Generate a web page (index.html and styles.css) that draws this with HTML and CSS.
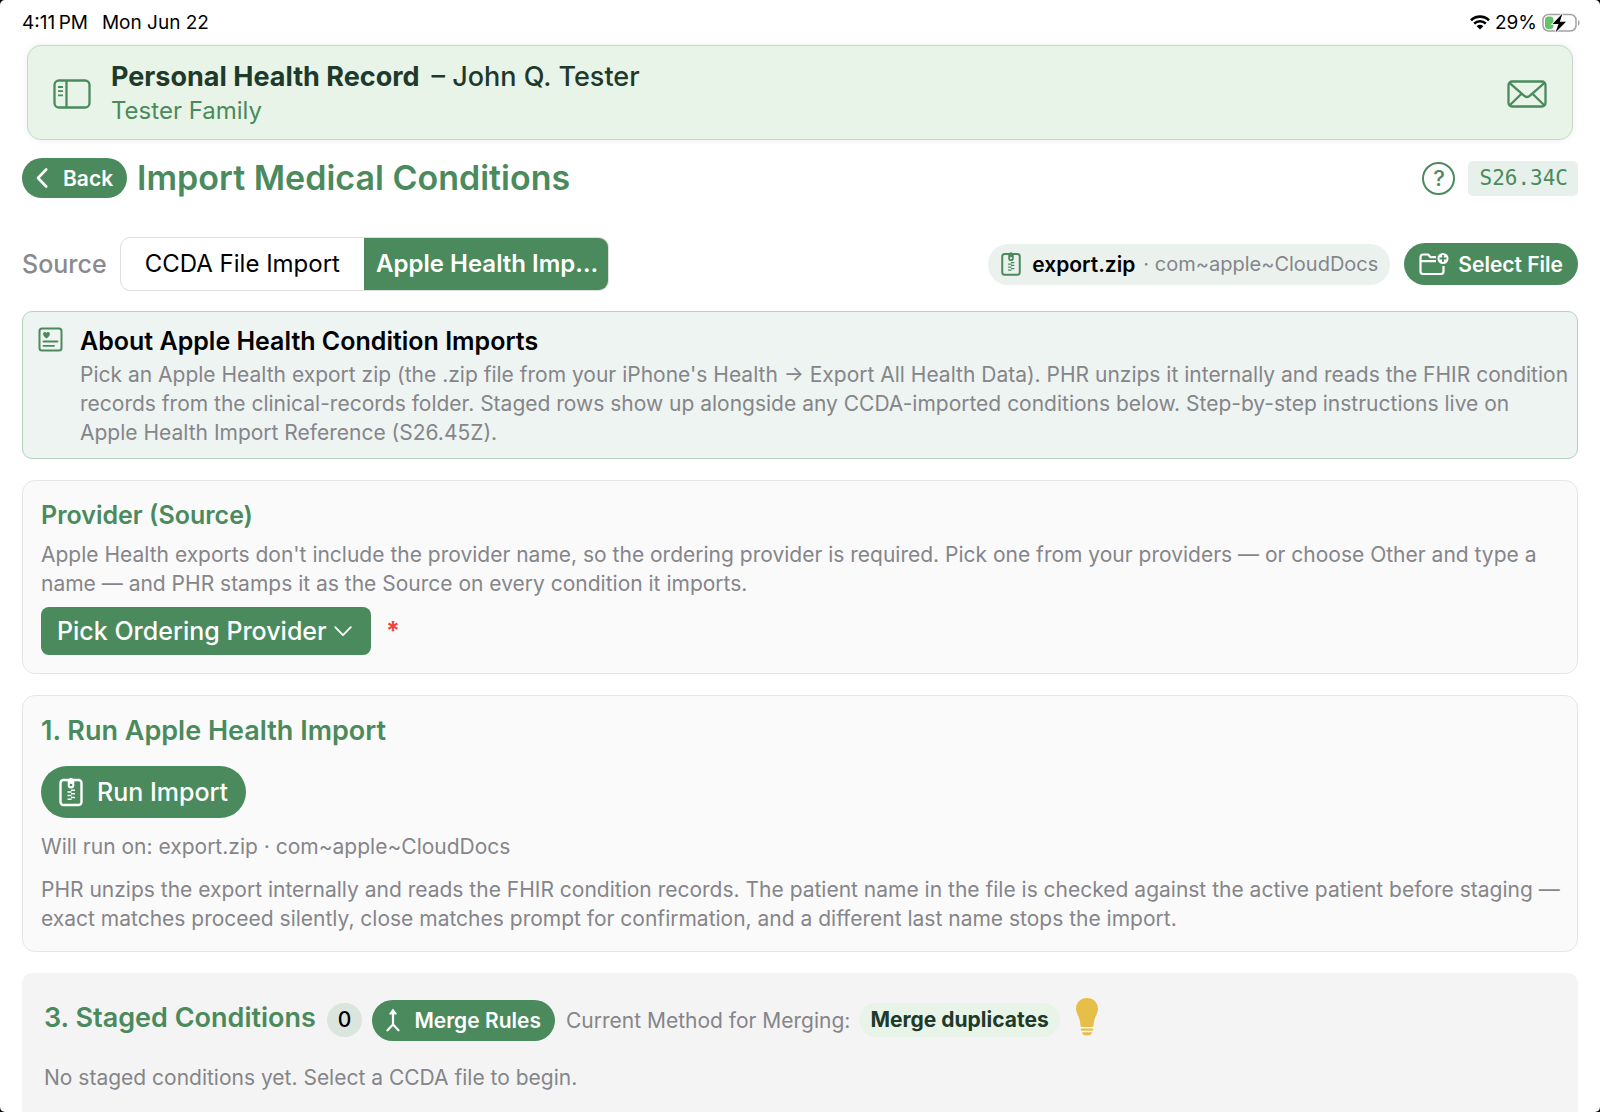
FILE: index.html
```html
<!DOCTYPE html>
<html lang="en">
<head>
<meta charset="utf-8">
<meta name="viewport" content="width=device-width, initial-scale=1">
<title>Import Medical Conditions</title>
<link rel="stylesheet" href="styles.css">
</head>
<body>
<svg class="symbols" aria-hidden="true">
  <symbol id="zip" viewBox="0 0 24 30">
    <rect x="1.5" y="3" width="21" height="25" rx="3" fill="none" stroke="currentColor" stroke-width="2.4"/>
    <path d="M12 0.8c1.3 0 2.1 1 2.1 2.2v.9h1.2v4.4a3.3 3.3 0 0 1-6.6 0V3.900h1.200V3c0-1.200.8-2.200 2.100-2.200z" fill="currentColor"/>
    <circle class="hole" cx="12" cy="8" r="1.300"/>
    <path d="M12 13.200h4M8.500 15h4M12 16.800h4M8.500 18.600h4M12 20.400h4M8.500 22.200h4" stroke="currentColor" stroke-width="1.500"/>
  </symbol>
</svg>
<div class="screen">
  <div class="status">
    <div class="status-side"><span>4:11&#8201;PM</span><span>Mon Jun 22</span></div>
    <div class="status-side status-right">
      <svg width="20" height="15" viewBox="0 0 20 15" fill="none" stroke="#000" stroke-width="2.600">
        <path d="M1 5.300a12.800 12.800 0 0 1 18 0M4.200 8.600a8.200 8.200 0 0 1 11.600 0"/>
        <path d="M6.700 11.200a4.700 4.700 0 0 1 6.600 0L10 14.500z" fill="#000" stroke="none"/>
      </svg>
      <span>29%</span>
      <svg width="38" height="20" viewBox="0 0 38 20">
        <rect x="1" y="1.500" width="33" height="16.500" rx="5.500" fill="#fff" stroke="#a2a2a2" stroke-width="1.500"/>
        <path d="M36 7c2 .8 2 4.800 0 5.600z" fill="#a2a2a2"/>
        <path d="M6.500 3.500h2.500a3 3 0 0 1 2.500 3v6.500a3 3 0 0 1-2.500 3H6.500a3.500 3.500 0 0 1-3.500-3.500V7a3.500 3.500 0 0 1 3.500-3.500z" fill="#62c466"/>
        <path d="M20.500 0.500L10.500 11h6l-3 8.500L24 8.800h-6.200z" fill="#000" stroke="#fff" stroke-width="1.600" paint-order="stroke"/>
      </svg>
    </div>
  </div>

  <header class="record">
    <button class="icon-button" aria-label="Toggle sidebar">
      <svg width="38" height="30" viewBox="0 0 38 30" fill="none" stroke="currentColor" stroke-width="2.300">
        <rect x="1.500" y="1.500" width="35" height="27" rx="4.500"/>
        <path d="M13.500 1.500v27"/><path d="M5 8h5M5 12.200h5M5 16.400h5" stroke-width="1.800"/>
      </svg>
    </button>
    <div class="record-text">
      <div class="record-name"><strong>Personal Health Record</strong><span>– John Q. Tester</span></div>
      <div class="record-family">Tester Family</div>
    </div>
    <button class="icon-button" aria-label="Messages">
      <svg width="40" height="28" viewBox="0 0 40 28" fill="none" stroke="currentColor" stroke-width="2.300" stroke-linejoin="round">
        <rect x="1.500" y="1.500" width="37" height="25" rx="3.500"/>
        <path d="M2.500 2.800L17 15.700c1.900 1.700 4.100 1.700 6 0L37.500 2.800M2.500 25.500L14.500 13.800M37.500 25.500L25.500 13.800"/>
      </svg>
    </button>
  </header>

  <main class="content">
    <div class="title-row">
      <button class="pill back">
        <svg width="12" height="20" viewBox="0 0 12 20" fill="none" stroke="currentColor" stroke-width="2.600" stroke-linecap="round" stroke-linejoin="round"><path d="M10.200 1.500L2 10l8.200 8.500"/></svg>
        <span>Back</span>
      </button>
      <h1>Import Medical Conditions</h1>
      <button class="icon-button help" aria-label="Help">
        <span>?</span>
      </button>
      <span class="code">S26.34C</span>
    </div>

    <div class="source-row">
      <span class="source-label" id="source-label">Source</span>
      <div class="segments" role="radiogroup" aria-labelledby="source-label">
        <label class="segment"><input type="radio" name="source"><span>CCDA File Import</span></label>
        <label class="segment"><input type="radio" name="source" checked><span>Apple Health Import</span></label>
      </div>
      <div class="file-chip">
        <svg class="chip-zip" width="20" height="26"><use href="#zip"/></svg>
        <strong>export.zip</strong><span>· com~apple~CloudDocs</span>
      </div>
      <button class="pill select-file">
        <svg width="30" height="24" viewBox="0 0 30 24" fill="none" stroke="currentColor" stroke-width="2.200" stroke-linejoin="round">
          <path d="M17 5.200h-5.500L9.200 2.500H4A2.500 2.500 0 0 0 1.500 5v14.500A2.500 2.500 0 0 0 4 22h18a2.500 2.500 0 0 0 2.500-2.500V14M1.500 9.200H17"/>
          <circle cx="24" cy="6.500" r="5.500" fill="currentColor" stroke="none"/>
          <path d="M24 3v7M20.500 6.500h7" stroke="#4a8a5c" stroke-width="1.800"/>
        </svg>
        <span>Select File</span>
      </button>
    </div>

    <section class="about">
      <svg width="25" height="25" viewBox="0 0 25 25" fill="none" stroke="currentColor" stroke-width="2">
        <rect x="1.500" y="1.500" width="22" height="22" rx="2.500"/>
        <path d="M8.500 11.500C3.500 8 5 5 6.800 5c.9 0 1.400.5 1.700 1.100C8.800 5.500 9.300 5 10.200 5c1.800 0 3.300 3-1.700 6.500z" fill="currentColor" stroke="none"/>
        <path d="M5.500 14.500h14M5.500 18.800h10.500" stroke-linecap="round" stroke-width="1.800"/>
      </svg>
      <div>
        <h2>About Apple Health Condition Imports</h2>
        <p>Pick an Apple Health export zip (the .zip file from your iPhone's Health → Export All Health Data). PHR unzips it internally and reads the FHIR condition records from the clinical-records folder. Staged rows show up alongside any CCDA-imported conditions below. Step-by-step instructions live on Apple Health Import Reference (S26.45Z).</p>
      </div>
    </section>

    <section class="card provider">
      <h2>Provider (Source)</h2>
      <p>Apple Health exports don't include the provider name, so the ordering provider is required. Pick one from your providers — or choose Other and type a name — and PHR stamps it as the Source on every condition it imports.</p>
      <div class="picker-row">
        <div class="picker">
          <select aria-label="Ordering provider" required><option>Pick Ordering Provider</option></select>
          <svg width="18" height="11" viewBox="0 0 18 11" fill="none" stroke="#fff" stroke-width="1.800" stroke-linecap="round" stroke-linejoin="round"><path d="M1.200 1.200L9 9.200l7.800-8"/></svg>
        </div>
        <span class="required">*</span>
      </div>
    </section>

    <section class="card run">
      <h2>1. Run Apple Health Import</h2>
      <button class="pill run-button">
        <svg class="run-zip" width="24" height="30"><use href="#zip"/></svg>
        <span>Run Import</span>
      </button>
      <p>Will run on: export.zip · com~apple~CloudDocs</p>
      <p>PHR unzips the export internally and reads the FHIR condition records. The patient name in the file is checked against the active patient before staging — exact matches proceed silently, close matches prompt for confirmation, and a different last name stops the import.</p>
    </section>

    <section class="staged">
      <div class="staged-row">
        <h2>3. Staged Conditions</h2>
        <span class="count">0</span>
        <button class="pill merge">
          <svg width="14" height="24" viewBox="0 0 14 24" fill="none" stroke="currentColor" stroke-width="2.200" stroke-linecap="round" stroke-linejoin="round"><path d="M7 5v11.500L1.500 22.300M7 16.500l5.500 5.800"/><path d="M7 1.500L3.800 5.800h6.400z" fill="currentColor" stroke-width="1.200"/></svg>
          <span>Merge Rules</span>
        </button>
        <span class="method">Current Method for Merging:</span>
        <strong class="method-chip">Merge duplicates</strong>
        <svg class="bulb" width="22" height="38" viewBox="0 0 22 38" fill="#e6bf48">
          <path d="M11 0c6.300 0 11 4.700 11 10.800 0 3.200-1.500 5.600-2.800 8.500-1 2.400-1.400 5.500-1.700 8.200-.1 1-.7 1.500-1.600 1.500H6.100c-.9 0-1.500-.5-1.600-1.500-.3-2.700-.7-5.800-1.700-8.200C1.500 16.400 0 14 0 10.800 0 4.700 4.700 0 11 0z"/>
          <rect x="4.800" y="30.400" width="12.400" height="2.400" rx="1.200"/><path d="M6 34.200h10c0 2-2 3.300-5 3.300s-5-1.300-5-3.300z"/>
        </svg>
      </div>
      <p>No staged conditions yet. Select a CCDA file to begin.</p>
    </section>
  </main>
</div>
</body>
</html>
```
FILE: styles.css
```css
* { box-sizing: border-box; }

html { background: #000; }

body {
  margin: 0;
  font-family: Inter, "Liberation Sans", sans-serif;
  font-size: 21px;
  line-height: 29px;
  color: #000;
}

h1, h2, p { margin: 0; }

h2 {
  font-size: 27px;
  line-height: 34px;
  font-weight: 600;
}

button, select {
  font: inherit;
  border: 0;
  margin: 0;
  cursor: pointer;
}

svg { flex: none; display: block; }

.symbols { position: absolute; width: 0; height: 0; }

.screen {
  display: flex;
  flex-direction: column;
  min-height: 100vh;
  background: #fff;
  border-radius: 5px;
  overflow: hidden;
}

/* Status bar */
.status {
  display: flex;
  justify-content: space-between;
  align-items: center;
  height: 45px;
  padding: 0 20px 0 22px;
  font-size: 19px;
}
.status-side { display: flex; gap: 14px; align-items: center; }
.status-right { gap: 5px; }

/* Patient header */
.record {
  display: flex;
  align-items: center;
  height: 95px;
  margin: 0 27px;
  padding: 2px 25px 0;
  gap: 20px;
  background: #e9f4e9;
  border: 1px solid #c9d6cb;
  border-radius: 14px;
  box-shadow: 0 0 6px rgba(0, 0, 0, 0.08);
}
.record-text { flex: 1; }
.record-name {
  display: flex;
  gap: 12px;
  font-size: 27px;
  line-height: 34px;
  font-weight: 500;
  color: #1e3a2a;
}
.record-name strong { font-weight: 700; }
.record-family { font-size: 24px; line-height: 34px; color: #4a8a5c; }

.icon-button {
  display: flex;
  padding: 0;
  background: none;
  color: #4a8a5c;
}

.content {
  flex: 1;
  display: flex;
  flex-direction: column;
  padding: 17px 22px 0;
}

/* Buttons */
.pill {
  display: flex;
  align-items: center;
  justify-content: center;
  flex: none;
  border-radius: 26px;
  background: #4a8a5c;
  color: #fff;
  font-size: 21px;
  font-weight: 600;
  white-space: nowrap;
}
.back { height: 40px; padding: 0 14px; gap: 15px; }
.select-file { height: 42px; padding: 0 15px; gap: 9px; }
.merge { height: 41px; padding: 0 14px; gap: 14px; }
.run-button {
  height: 52px;
  padding: 0 18px;
  gap: 14px;
  font-size: 25px;
  font-weight: 500;
}

/* Title */
.title-row { display: flex; align-items: center; height: 42px; }
h1 {
  flex: 1;
  margin-left: 10px;
  font-size: 34px;
  line-height: 42px;
  font-weight: 600;
  color: #4a8a5c;
}
.help {
  width: 33px;
  height: 33px;
  margin-right: 13px;
  align-items: center;
  justify-content: center;
  border: 2px solid #4a8a5c;
  border-radius: 50%;
  font-size: 22px;
  font-weight: 500;
}
.code {
  padding: 3px 10px 3px 11px;
  border-radius: 5px;
  background: #e8f0eb;
  color: #4a8a5c;
  font-family: "DejaVu Sans Mono", "Liberation Mono", monospace;
  font-size: 21px;
}

/* Source */
.source-row {
  display: flex;
  align-items: center;
  height: 54px;
  margin-top: 38px;
}
.source-label { font-size: 25px; font-weight: 500; color: #8a8a8e; }
.segments {
  display: grid;
  grid-template-columns: 1fr 1fr;
  width: 489px;
  height: 54px;
  margin: 0 auto 0 13px;
  border: 1px solid #dedede;
  border-radius: 10px;
  overflow: hidden;
  font-size: 24px;
}
.segment { position: relative; display: grid; min-width: 0; cursor: pointer; }
.segment input {
  position: absolute;
  inset: 0;
  margin: 0;
  appearance: none;
}
.segment span {
  padding: 0 8px;
  line-height: 52px;
  text-align: center;
  white-space: nowrap;
  overflow: hidden;
  text-overflow: ellipsis;
}
.segment input:checked + span {
  position: relative;
  padding: 0 4px 0 12px;
  background: #4a8a5c;
  color: #fff;
  font-weight: 600;
}
.file-chip {
  display: flex;
  align-items: center;
  height: 41px;
  margin-right: 14px;
  padding: 0 12px 0 13px;
  border-radius: 20px;
  background: #ebf2ee;
  color: #85858a;
  font-size: 20px;
  white-space: nowrap;
}
.file-chip strong {
  margin: 0 8px 0 11px;
  color: #000;
  font-size: 21px;
  font-weight: 600;
}
.chip-zip { color: #4a8a5c; fill: #ebf2ee; }
.run-zip { fill: #4a8a5c; }

/* Information panel */
.about {
  display: flex;
  gap: 17px;
  margin-top: 20px;
  padding: 12px 8px 11px 15px;
  border: 1px solid #b3d2c0;
  border-radius: 10px;
  background: #eef4f1;
  color: #4a8a5c;
}
.about svg { margin-top: 3px; }
.about h2 { color: #000; font-size: 25px; margin-bottom: 2px; }
p { color: #85858a; }

/* Cards */
.card {
  display: flex;
  flex-direction: column;
  align-items: flex-start;
  margin-top: 21px;
  padding: 17px 10px 18px 18px;
  border: 1px solid #e6e6e6;
  border-radius: 13px;
  background: #fafafa;
}
.card h2, .staged h2 { color: #4a8a5c; }
.provider h2 { font-size: 25px; margin-bottom: 8px; }
.picker-row { display: flex; align-items: center; gap: 15px; margin-top: 9px; }
.picker {
  display: grid;
  align-items: center;
  justify-items: end;
}
.picker > * { grid-area: 1 / 1; }
.picker svg { margin-right: 19px; pointer-events: none; }
.picker select {
  appearance: none;
  height: 48px;
  padding: 0 44px 0 16px;
  border-radius: 8px;
  background: #4a8a5c;
  color: #fff;
  font-size: 25px;
  font-weight: 500;
}
.required { color: #f0443c; font-size: 25px; font-weight: 700; }

.run { padding-top: 18px; }
.run h2 { margin-bottom: 18px; }
.run p { margin-top: 14px; }

.staged {
  flex: 1;
  margin-top: 21px;
  padding: 25px 22px 20px;
  border-radius: 10px 10px 0 0;
  background: #f4f4f4;
}
.staged-row {
  display: flex;
  align-items: center;
  height: 44px;
  white-space: nowrap;
}
.staged h2 { margin-bottom: 4px; }
.count {
  margin: 0 10px 0 11px;
  padding: 0 11px;
  border-radius: 18px;
  background: #dae5de;
  font-weight: 500;
  line-height: 34px;
}
.method { margin: 0 9px 0 11px; color: #85858a; }
.method-chip {
  padding: 0 11px;
  border-radius: 17px;
  background: #e9f4e9;
  color: #1e3a2a;
  font-weight: 700;
  line-height: 34px;
}
.bulb { align-self: flex-start; margin-left: 16px; }
.staged p { margin-top: 21px; }
```
